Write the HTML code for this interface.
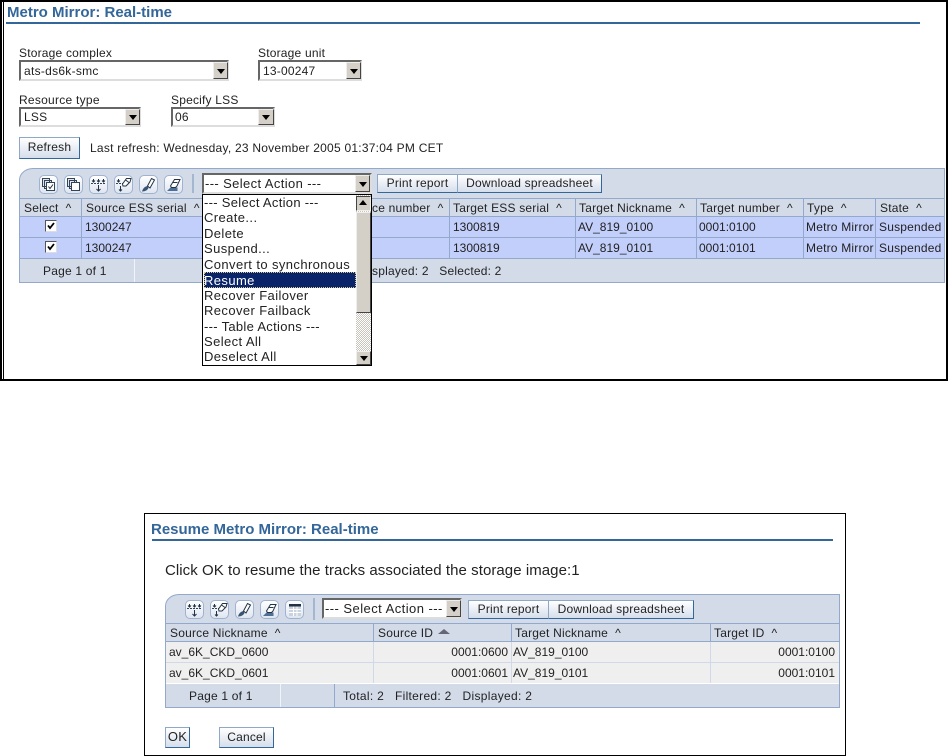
<!DOCTYPE html>
<html><head><meta charset="utf-8">
<style>
html,body{margin:0;padding:0;background:#fff}
#p{position:relative;width:948px;height:756px;overflow:hidden;background:#fff;font-family:"Liberation Sans",Arial,sans-serif;font-size:12px;color:#222}
#p div,#p span.t{position:absolute;box-sizing:border-box}
.t{white-space:nowrap;line-height:14px;letter-spacing:.2px}
.d{font-size:13px;letter-spacing:.4px}
.h{font-weight:bold;color:#336699;font-size:15px;line-height:16px;letter-spacing:0;white-space:nowrap}
.sel{background:#fff;border:2px solid;border-color:#666 #ddd #ddd #666;outline:0}
.arr{background:#d4d0c8;border:1px solid;border-color:#eee #444 #444 #eee}
.arr:after{content:"";position:absolute;left:50%;top:50%;margin:-2px 0 0 -4px;border:4px solid transparent;border-top:5px solid #000;border-bottom:0}
.btn{background:linear-gradient(#fff,#d5deec);border:1px solid #336699;border-top-color:#8fa8c8;border-left-color:#8fa8c8;text-align:center;white-space:nowrap;line-height:17px;letter-spacing:.2px}
.ib{width:19px;height:19px;border:1px solid #9fb2d0;border-radius:5px;background:linear-gradient(#fff,#dfe6f1)}
.ib svg{position:absolute;left:0;top:0}
</style></head><body>
<div id="p">
<svg width="0" height="0" style="position:absolute">
<symbol id="i1" viewBox="0 0 17 17"><path d="M2.500 2.500h7v8h-7zM4.500 4.500h7v8h-7z" fill="#dfe6f1" stroke="#345" stroke-width="1"/><path d="M6.500 6.500h8v8h-8z" fill="#fff" stroke="#345" stroke-width="1"/><path d="M8.500 10.500l1.500 2 3-4" fill="none" stroke="#234" stroke-width="1"/></symbol>
<symbol id="i2" viewBox="0 0 17 17"><path d="M2.500 2.500h7v8h-7zM4.500 4.500h7v8h-7z" fill="#dfe6f1" stroke="#345" stroke-width="1"/><path d="M6.500 6.500h8v8h-8z" fill="#fff" stroke="#345" stroke-width="1"/></symbol>
<symbol id="i3" viewBox="0 0 17 17"><path d="M1 7.500h15" stroke="#345" stroke-dasharray="2 1"/><path d="M3.500 3v3M2 4.500l1.500 1.500 1.500-1.500M8.500 3v3M7 4.500L8.500 6 10 4.500M13.500 3v3M12 4.500L13.500 6 15 4.500M8.500 9v6M6.500 13l2 2 2-2" fill="none" stroke="#234"/></symbol>
<symbol id="i4" viewBox="0 0 17 17"><path d="M1 7.500h7" stroke="#345" stroke-dasharray="2 1"/><path d="M3.500 3v3M2 4.500l1.500 1.500 1.500-1.500M5.500 10v5M4 13.500L5.500 15 7 13.500" fill="none" stroke="#234"/><path d="M7.500 8l4-5.500h4.500l-1 3.500-4 4H8z" fill="#fff" stroke="#234"/><path d="M10.500 4l3.500 2.500" stroke="#234"/></symbol>
<symbol id="i5" viewBox="0 0 17 17"><path d="M2 15.500c1-3.500 3-5 5.500-5.500l1 2c-1 2-3 3.500-6.500 3.500z" fill="#3a5373"/><path d="M7.500 10l4-7.500 3 1.500-4.500 8z" fill="#fff" stroke="#234"/></symbol>
<symbol id="i6" viewBox="0 0 17 17"><path d="M2 15l3.500-3.500h7V15z" fill="#4f6f96"/><path d="M5.500 10l4-6.500h5.500l-3 6.500-1.500 1.500H6.500z" fill="#fff" stroke="#234"/><path d="M7.500 6.500h5" stroke="#234"/></symbol>
<symbol id="i7" viewBox="0 0 17 17"><path d="M3 3h12v12H3z" fill="#c9d2de"/><path d="M3 3h12v2.500H3z" fill="#234"/><path d="M7.500 5.500V15M11 5.500V15M3 8.500h12M3 11.500h12" stroke="#fff"/></symbol>
</svg>

<!-- top frame -->
<div style="left:0;top:0;width:948px;height:381px;border-top:2px solid #000;border-bottom:2px solid #000"></div>
<div style="left:0;top:0;width:2px;height:381px;background:#000"></div>
<div style="left:3px;top:0;width:1px;height:381px;background:#000"></div>
<div style="left:946px;top:0;width:2px;height:381px;background:#000"></div>

<div class="h" style="left:7px;top:5px">Metro Mirror: Real-time</div>
<div style="left:6px;top:22px;width:914px;height:2px;background:#336699"></div>

<span class="t" style="left:19px;top:46px">Storage complex</span>
<span class="t" style="left:258px;top:46px">Storage unit</span>
<div class="sel" style="left:19px;top:60px;width:210px;height:21px"></div>
<span class="t" style="left:24px;top:64px;letter-spacing:.28px">ats-ds6k-smc</span>
<div class="arr" style="left:213px;top:62px;width:15px;height:17px"></div>
<div class="sel" style="left:258px;top:60px;width:104px;height:21px"></div>
<span class="t" style="left:263px;top:64px">13-00247</span>
<div class="arr" style="left:346px;top:62px;width:15px;height:17px"></div>

<span class="t" style="left:19px;top:93px;letter-spacing:.26px">Resource type</span>
<span class="t" style="left:171px;top:93px">Specify LSS</span>
<div class="sel" style="left:19px;top:107px;width:122px;height:20px"></div>
<span class="t" style="left:24px;top:110px">LSS</span>
<div class="arr" style="left:125px;top:109px;width:15px;height:16px"></div>
<div class="sel" style="left:171px;top:107px;width:104px;height:20px"></div>
<span class="t" style="left:175px;top:110px">06</span>
<div class="arr" style="left:258px;top:109px;width:16px;height:16px"></div>

<div class="btn" style="left:19px;top:137px;width:61px;height:22px;line-height:18px">Refresh</div>
<span class="t" style="left:90px;top:141px;letter-spacing:.24px">Last refresh: Wednesday, 23 November 2005 01:37:04 PM CET</span>

<!-- table 1 -->
<div style="left:19px;top:168px;width:926px;height:115px;background:#d3dbe9;border:1px solid #93a9cc;border-top-left-radius:14px 12px"></div>
<div class="ib" style="left:39px;top:175px"><svg width="17" height="17"><use href="#i1"/></svg></div>
<div class="ib" style="left:64px;top:175px"><svg width="17" height="17"><use href="#i2"/></svg></div>
<div class="ib" style="left:89px;top:175px"><svg width="17" height="17"><use href="#i3"/></svg></div>
<div class="ib" style="left:114px;top:175px"><svg width="17" height="17"><use href="#i4"/></svg></div>
<div class="ib" style="left:139px;top:175px"><svg width="17" height="17"><use href="#i5"/></svg></div>
<div class="ib" style="left:164px;top:175px"><svg width="17" height="17"><use href="#i6"/></svg></div>
<div style="left:192px;top:174px;width:2px;height:19px;background:#a5b6d0"></div>
<div class="btn" style="left:377px;top:174px;width:81px;height:19px">Print report</div>
<div class="btn" style="left:457px;top:174px;width:145px;height:19px">Download spreadsheet</div>

<div style="left:20px;top:198px;width:924px;height:1px;background:#93a9cc"></div>
<div style="left:20px;top:217px;width:924px;height:21px;background:#c3cffb"></div>
<div style="left:20px;top:238px;width:924px;height:21px;background:#c3cffb"></div>
<div style="left:20px;top:216px;width:924px;height:1px;background:#93a9cc"></div>
<div style="left:20px;top:237px;width:924px;height:1px;background:#93a9cc"></div>
<div style="left:20px;top:258px;width:924px;height:1px;background:#93a9cc"></div>
<div style="left:81px;top:199px;width:1px;height:59px;background:#93a9cc"></div>
<div style="left:449px;top:199px;width:1px;height:59px;background:#93a9cc"></div>
<div style="left:575px;top:199px;width:1px;height:59px;background:#93a9cc"></div>
<div style="left:696px;top:199px;width:1px;height:59px;background:#93a9cc"></div>
<div style="left:803px;top:199px;width:1px;height:59px;background:#93a9cc"></div>
<div style="left:875px;top:199px;width:1px;height:59px;background:#93a9cc"></div>
<div style="left:134px;top:259px;width:1px;height:23px;background:#f0f3f8"></div>

<span class="t" style="left:24px;top:201px">Select &nbsp;^</span>
<span class="t" style="left:86px;top:201px">Source ESS serial &nbsp;^</span>
<span class="t" style="left:372px;top:201px">ce number &nbsp;^</span>
<span class="t" style="left:453px;top:201px">Target ESS serial &nbsp;^</span>
<span class="t" style="left:579px;top:201px">Target Nickname &nbsp;^</span>
<span class="t" style="left:700px;top:201px">Target number &nbsp;^</span>
<span class="t" style="left:807px;top:201px">Type &nbsp;^</span>
<span class="t" style="left:880px;top:201px">State &nbsp;^</span>

<div style="left:45px;top:220px;width:12px;height:12px;background:#fff;border:1px solid #555;border-right-color:#ddd;border-bottom-color:#ddd"><svg width="10" height="10" style="position:absolute;left:0;top:0"><path d="M2 4.500l2 2.500 4-5" fill="none" stroke="#000" stroke-width="1.800"/></svg></div>
<div style="left:45px;top:241px;width:12px;height:12px;background:#fff;border:1px solid #555;border-right-color:#ddd;border-bottom-color:#ddd"><svg width="10" height="10" style="position:absolute;left:0;top:0"><path d="M2 4.500l2 2.500 4-5" fill="none" stroke="#000" stroke-width="1.800"/></svg></div>

<span class="t" style="left:85px;top:220px;letter-spacing:0">1300247</span>
<span class="t" style="left:85px;top:241px;letter-spacing:0">1300247</span>
<span class="t" style="left:453px;top:220px;letter-spacing:0">1300819</span>
<span class="t" style="left:453px;top:241px;letter-spacing:0">1300819</span>
<span class="t" style="left:578px;top:220px;letter-spacing:0">AV_819_0100</span>
<span class="t" style="left:578px;top:241px;letter-spacing:0">AV_819_0101</span>
<span class="t" style="left:699px;top:220px;letter-spacing:0">0001:0100</span>
<span class="t" style="left:699px;top:241px;letter-spacing:0">0001:0101</span>
<span class="t" style="left:806px;top:220px">Metro Mirror</span>
<span class="t" style="left:806px;top:241px">Metro Mirror</span>
<span class="t" style="left:879px;top:220px">Suspended</span>
<span class="t" style="left:879px;top:241px">Suspended</span>

<span class="t" style="left:43px;top:264px">Page 1 of 1</span>
<span class="t" style="left:372px;top:264px">splayed: 2 &nbsp; Selected: 2</span>

<!-- dropdown -->
<div class="sel" style="left:202px;top:173px;width:170px;height:21px"></div>
<span class="t d" style="left:205px;top:177px;letter-spacing:.38px">--- Select Action ---</span>
<div class="arr" style="left:355px;top:175px;width:15px;height:17px"></div>
<div style="left:202px;top:194px;width:170px;height:172px;background:#fff;border:1px solid #000"></div>
<div style="left:204px;top:272px;width:152px;height:16px;background:#0a246a;outline:1px dotted #d8c890;outline-offset:-1px"></div>
<span class="t d" style="left:204px;top:196px;letter-spacing:.3px">--- Select Action ---</span>
<span class="t d" style="left:204px;top:211px">Create...</span>
<span class="t d" style="left:204px;top:227px">Delete</span>
<span class="t d" style="left:204px;top:242px">Suspend...</span>
<span class="t d" style="left:204px;top:258px">Convert to synchronous</span>
<span class="t d" style="left:204px;top:274px;color:#fff">Resume</span>
<span class="t d" style="left:204px;top:289px">Recover Failover</span>
<span class="t d" style="left:204px;top:304px">Recover Failback</span>
<span class="t d" style="left:204px;top:320px;letter-spacing:.3px">--- Table Actions ---</span>
<span class="t d" style="left:204px;top:335px">Select All</span>
<span class="t d" style="left:204px;top:350px">Deselect All</span>
<div style="left:356px;top:195px;width:15px;height:170px;background:repeating-conic-gradient(#fff 0 25%,#c8c4bc 0 50%) 0 0/2px 2px"></div>
<div class="arr" style="left:356px;top:196px;width:15px;height:15px;transform:rotate(180deg)"></div>
<div style="left:356px;top:212px;width:15px;height:101px;background:#d4d0c8;border:1px solid;border-color:#eee #444 #444 #eee"></div>
<div class="arr" style="left:356px;top:351px;width:15px;height:14px"></div>

<!-- bottom frame -->
<div style="left:144px;top:513px;width:702px;height:243px;border:1px solid #000"></div>
<div class="h" style="left:151px;top:522px">Resume Metro Mirror: Real-time</div>
<div style="left:152px;top:539px;width:681px;height:2px;background:#336699"></div>
<span class="t" style="left:165px;top:564px;font-size:15px;letter-spacing:.06px">Click OK to resume the tracks associated the storage image:1</span>

<div style="left:165px;top:594px;width:675px;height:114px;background:#d3dbe9;border:1px solid #93a9cc;border-top-left-radius:14px 12px"></div>
<div class="ib" style="left:185px;top:600px"><svg width="17" height="17"><use href="#i3"/></svg></div>
<div class="ib" style="left:210px;top:600px"><svg width="17" height="17"><use href="#i4"/></svg></div>
<div class="ib" style="left:235px;top:600px"><svg width="17" height="17"><use href="#i5"/></svg></div>
<div class="ib" style="left:260px;top:600px"><svg width="17" height="17"><use href="#i6"/></svg></div>
<div class="ib" style="left:285px;top:600px"><svg width="17" height="17"><use href="#i7"/></svg></div>
<div style="left:313px;top:598px;width:2px;height:22px;background:#a5b6d0"></div>
<div class="sel" style="left:322px;top:598px;width:140px;height:21px"></div>
<span class="t d" style="left:325px;top:602px;letter-spacing:.45px">--- Select Action ---</span>
<div class="arr" style="left:446px;top:600px;width:15px;height:17px"></div>
<div class="btn" style="left:468px;top:600px;width:81px;height:19px">Print report</div>
<div class="btn" style="left:548px;top:600px;width:146px;height:19px">Download spreadsheet</div>

<div style="left:166px;top:623px;width:673px;height:1px;background:#93a9cc"></div>
<div style="left:166px;top:642px;width:673px;height:20px;background:#efefef"></div>
<div style="left:166px;top:663px;width:673px;height:20px;background:#efefef"></div>
<div style="left:166px;top:641px;width:673px;height:1px;background:#93a9cc"></div>
<div style="left:166px;top:662px;width:673px;height:1px;background:#d0d9e8"></div>
<div style="left:166px;top:683px;width:673px;height:1px;background:#fff"></div>
<div style="left:373px;top:624px;width:1px;height:17px;background:#93a9cc"></div>
<div style="left:511px;top:624px;width:1px;height:17px;background:#93a9cc"></div>
<div style="left:710px;top:624px;width:1px;height:17px;background:#93a9cc"></div>
<div style="left:373px;top:642px;width:1px;height:41px;background:#d0d9e8"></div>
<div style="left:511px;top:642px;width:1px;height:41px;background:#d0d9e8"></div>
<div style="left:710px;top:642px;width:1px;height:41px;background:#d0d9e8"></div>
<div style="left:280px;top:684px;width:1px;height:23px;background:#f0f3f8"></div>
<div style="left:334px;top:684px;width:1px;height:23px;background:#93a9cc"></div>

<span class="t" style="left:170px;top:626px">Source Nickname &nbsp;^</span>
<span class="t" style="left:378px;top:626px">Source ID</span>
<div style="left:438px;top:629px;width:0;height:0;border:6px solid transparent;border-bottom:5px solid #667;border-top:0"></div>
<span class="t" style="left:515px;top:626px">Target Nickname &nbsp;^</span>
<span class="t" style="left:714px;top:626px">Target ID &nbsp;^</span>

<span class="t" style="left:169px;top:645px;letter-spacing:0">av_6K_CKD_0600</span>
<span class="t" style="left:169px;top:666px;letter-spacing:0">av_6K_CKD_0601</span>
<span class="t" style="right:440px;top:645px;letter-spacing:0">0001:0600</span>
<span class="t" style="right:440px;top:666px;letter-spacing:0">0001:0601</span>
<span class="t" style="left:513px;top:645px;letter-spacing:0">AV_819_0100</span>
<span class="t" style="left:513px;top:666px;letter-spacing:0">AV_819_0101</span>
<span class="t" style="right:113px;top:645px;letter-spacing:0">0001:0100</span>
<span class="t" style="right:113px;top:666px;letter-spacing:0">0001:0101</span>

<span class="t" style="left:189px;top:689px">Page 1 of 1</span>
<span class="t" style="left:343px;top:689px;letter-spacing:.3px">Total: 2 &nbsp; Filtered: 2 &nbsp; Displayed: 2</span>

<div class="btn" style="left:165px;top:727px;width:25px;height:21px;line-height:18px;font-size:13px">OK</div>
<div class="btn" style="left:219px;top:727px;width:55px;height:21px;line-height:18px">Cancel</div>
</div>
</body></html>
